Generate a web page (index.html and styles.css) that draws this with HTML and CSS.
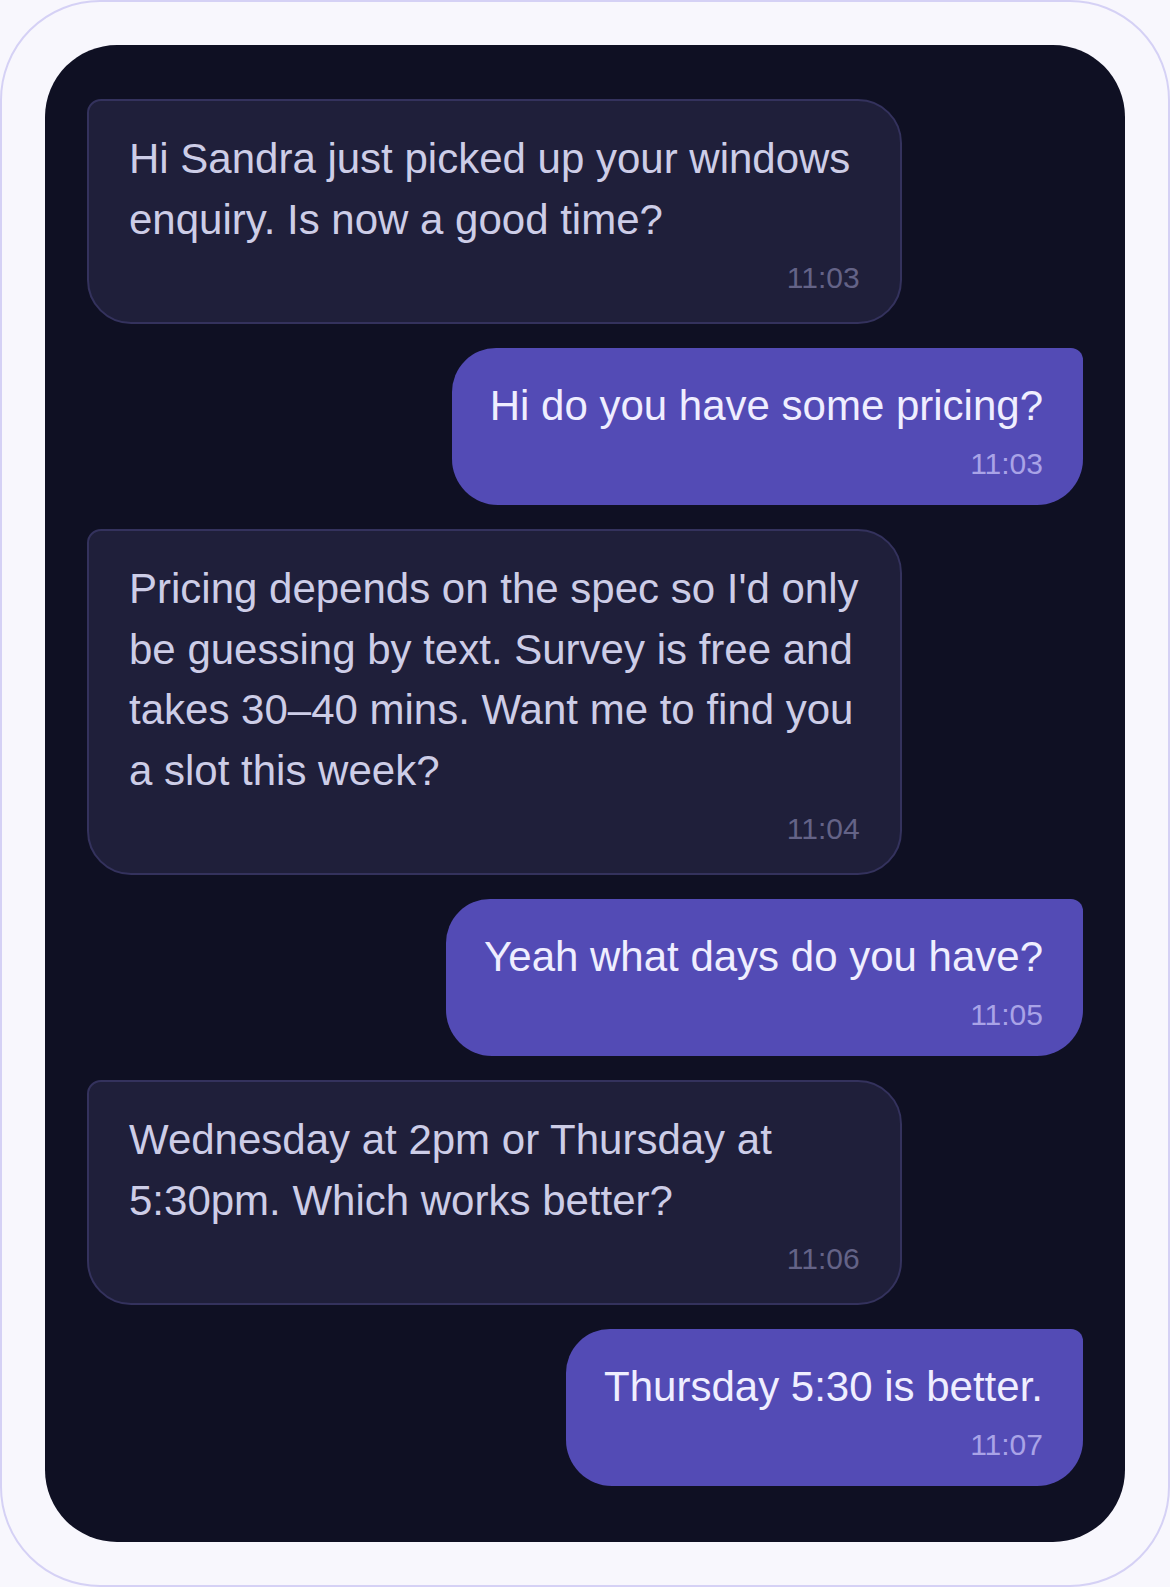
FILE: index.html
```html
<!DOCTYPE html>
<html lang="en">
<head>
  <meta charset="UTF-8">
  <meta name="viewport" content="width=device-width, initial-scale=1.0">
  <title>Chat</title>
  <link rel="stylesheet" href="styles.css">
</head>
<body>
  <div class="frame">
    <div class="chat">
      <div class="msg in">
        <p>Hi Sandra just picked up your windows enquiry. Is now a good time?</p>
        <span class="time">11:03</span>
      </div>
      <div class="msg out">
        <p>Hi do you have some pricing?</p>
        <span class="time">11:03</span>
      </div>
      <div class="msg in">
        <p>Pricing depends on the spec so I'd only be guessing by text. Survey is free and takes 30–40 mins. Want me to find you a slot this week?</p>
        <span class="time">11:04</span>
      </div>
      <div class="msg out">
        <p>Yeah what days do you have?</p>
        <span class="time">11:05</span>
      </div>
      <div class="msg in">
        <p>Wednesday at 2pm or Thursday at 5:30pm. Which works better?</p>
        <span class="time">11:06</span>
      </div>
      <div class="msg out">
        <p>Thursday 5:30 is better.</p>
        <span class="time">11:07</span>
      </div>
    </div>
  </div>
</body>
</html>
```

FILE: styles.css
```css
* {
  box-sizing: border-box;
}

body {
  margin: 0;
  font-family: "Liberation Sans", Arial, sans-serif;
  background: #f8f7fd;
}

.frame {
  min-height: 100vh;
  display: flex;
  flex-direction: column;
  padding: 43px;
  border: 2px solid #d5d1f5;
  border-radius: 100px;
  background: #f8f7fd;
}

.chat {
  flex: 1;
  display: flex;
  flex-direction: column;
  gap: 24px;
  padding: 54px 42px;
  border-radius: 72px;
  background: #0f1023;
}

.msg {
  display: flex;
  flex-direction: column;
  max-width: 81.8%;
  font-size: 42px;
  line-height: 1.45;
}
.msg p {
  margin: 0;
}
.time {
  align-self: flex-end;
  margin-top: 12px;
  font-size: 30px;
  line-height: 1;
}

.in {
  align-self: flex-start;
  padding: 28px 40px 29px;
  border: 2px solid #34325d;
  border-radius: 14px 44px 44px 44px;
  background: #1f1f3a;
  color: #cdcde7;
}
.in .time {
  color: #646387;
}

.out {
  align-self: flex-end;
  padding: 28px 40px 26px 38px;
  border-radius: 44px 12px 46px 46px;
  background: #534bb5;
  color: #efeeff;
}
.out .time {
  color: #a9a3e7;
}
```
